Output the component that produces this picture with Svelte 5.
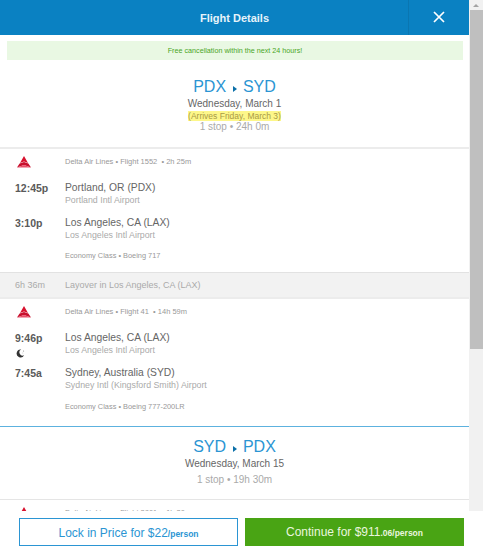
<script>
  const outbound = [
    {
      carrier: "Delta Air Lines • Flight 1552",
      duration: "2h 25m",
      depart: { time: "12:45p", city: "Portland, OR (PDX)", airport: "Portland Intl Airport" },
      arrive: { time: "3:10p", city: "Los Angeles, CA (LAX)", airport: "Los Angeles Intl Airport" },
      cabin: "Economy Class • Boeing 717",
      overnight: false
    },
    {
      carrier: "Delta Air Lines • Flight 41",
      duration: "14h 59m",
      depart: { time: "9:46p", city: "Los Angeles, CA (LAX)", airport: "Los Angeles Intl Airport" },
      arrive: { time: "7:45a", city: "Sydney, Australia (SYD)", airport: "Sydney Intl (Kingsford Smith) Airport" },
      cabin: "Economy Class • Boeing 777-200LR",
      overnight: true
    }
  ];
</script>

{#snippet delta()}
  <svg class="delta" viewBox="0 0 16 12" aria-hidden="true">
    <path d="M8 0 L12 7 L8 5.4 L4 7 Z" fill="#d8112e" />
    <path d="M3.6 7.6 L8 6 L12.4 7.6 L15 11.6 L8 9 L1 11.6 Z" fill="#c8102e" />
    <path d="M1 11.6 L8 9 L15 11.6 Z" fill="#e8506a" />
  </svg>
{/snippet}

{#snippet segment(seg)}
  <div class="segment" class:long={seg.overnight}>
    <div class="carrier">
      <span class="logo">{@render delta()}</span>
      <span class="small">{seg.carrier} &nbsp;• {seg.duration}</span>
    </div>
    <div class="stop">
      <span class="time">{seg.depart.time}</span>
      <div>
        <div class="city">{seg.depart.city}</div>
        <div class="airport">{seg.depart.airport}</div>
      </div>
    </div>
    {#if seg.overnight}
      <svg class="moon" viewBox="0 0 10 10" aria-hidden="true">
        <path d="M5.8 0.6 A4.4 4.4 0 1 0 9 7 A3.4 3.4 0 0 1 5.8 0.6 Z" fill="#333" />
        <circle cx="8.4" cy="2.2" r="0.6" fill="#888" />
        <circle cx="7.6" cy="4.4" r="0.5" fill="#aaa" />
      </svg>
    {/if}
    <div class="stop" class:after-moon={seg.overnight}>
      <span class="time">{seg.arrive.time}</span>
      <div>
        <div class="city">{seg.arrive.city}</div>
        <div class="airport">{seg.arrive.airport}</div>
      </div>
    </div>
    <div class="small cabin">{seg.cabin}</div>
  </div>
{/snippet}

<div class="page">
  <div class="upper">
    <div class="main">
      <header>
        <h1>Flight Details</h1>
        <button class="close" aria-label="Close">
          <svg viewBox="0 0 12 12" width="12" height="12">
            <path d="M1 1 L11 11 M11 1 L1 11" stroke="#fff" stroke-width="1.7" fill="none" />
          </svg>
        </button>
      </header>

      <div class="notice">Free cancellation within the next 24 hours!</div>

      <section class="route first">
        <h2>PDX <span class="arrow"></span> SYD</h2>
        <div class="date">Wednesday, March 1</div>
        <div class="arrives"><mark>(Arrives Friday, March 3)</mark></div>
        <div class="stops">1 stop • 24h 0m</div>
      </section>

      {@render segment(outbound[0])}

      <div class="layover">
        <span>6h 36m</span>
        <span>Layover in Los Angeles, CA (LAX)</span>
      </div>

      {@render segment(outbound[1])}

      <section class="route second">
        <h2>SYD <span class="arrow"></span> PDX</h2>
        <div class="date">Wednesday, March 15</div>
        <div class="stops">1 stop • 19h 30m</div>
      </section>

      <div class="segment cut">
        <div class="carrier">
          <span class="logo">{@render delta()}</span>
          <span class="small">Delta Air Lines • Flight 3801 &nbsp;• 1h 30m</span>
        </div>
      </div>
    </div>

    <div class="scrollbar">
      <span class="up"></span>
      <span class="thumb"></span>
    </div>
  </div>

  <footer>
    <button class="lock">Lock in Price for $22<small>/person</small></button>
    <button class="continue">Continue for $911<small>.06/person</small></button>
  </footer>
</div>

<style>
  :global(body) {
    margin: 0;
    background: #fff;
  }

  .page {
    height: 550px;
    display: flex;
    flex-direction: column;
    overflow: hidden;
    font-family: "Liberation Sans", Arial, sans-serif;
    color: #555;
  }

  .upper {
    flex: 1;
    min-height: 0;
    display: flex;
  }

  .main {
    flex: 1;
    min-width: 0;
    overflow: hidden;
  }

  header {
    height: 35px;
    background: #0a81c2;
    display: flex;
    align-items: center;
  }

  h1 {
    flex: 1;
    margin: 0;
    padding-left: 61px;
    text-align: center;
    font-size: 11px;
    font-weight: 700;
    color: #e6f3fa;
  }

  .close {
    width: 61px;
    height: 35px;
    padding: 0 0 2px;
    border: 0;
    border-left: 1px solid #0a76b1;
    background: none;
    display: flex;
    align-items: center;
    justify-content: center;
  }

  .notice {
    margin: 6px 6px 0 7px;
    height: 19px;
    line-height: 19px;
    background: #e9f8e3;
    color: #4aa51f;
    font-size: 7.2px;
    text-align: center;
  }

  .route {
    text-align: center;
  }

  .route.first {
    padding-top: 17px;
    height: 70px;
  }

  .route.second {
    height: 62px;
    margin-top: 3px;
    border-top: 1px solid #5db2df;
    border-bottom: 1px solid #e5e5e5;
    padding-top: 10px;
  }

  h2 {
    margin: 0;
    font-size: 16px;
    line-height: 20px;
    font-weight: 400;
    color: #2b95d3;
  }

  .arrow {
    display: inline-block;
    width: 0;
    height: 0;
    margin: 0 2px;
    border-left: 4px solid #0a6fa8;
    border-top: 3.5px solid transparent;
    border-bottom: 3.5px solid transparent;
    vertical-align: 0;
  }

  .date {
    font-size: 10px;
    line-height: 14px;
    color: #666;
  }

  .arrives {
    font-size: 8.5px;
    line-height: 10px;
  }

  mark {
    background: #fdf78a;
    color: #a99a45;
  }

  .stops {
    font-size: 10px;
    line-height: 11px;
    color: #aaa;
  }

  .second .stops {
    margin-top: 3px;
  }

  .segment {
    border-top: 2px solid #ececec;
    padding: 0 0 11px 15px;
  }

  .carrier {
    display: flex;
    align-items: center;
    height: 25px;
    padding-bottom: 1px;
  }

  .logo {
    width: 50px;
    display: flex;
    padding-left: 1px;
    box-sizing: border-box;
  }

  .delta {
    width: 16px;
    height: 12px;
  }

  .small {
    font-size: 7.5px;
    color: #999;
  }

  .stop {
    display: grid;
    grid-template-columns: 50px 1fr;
    margin-top: 6px;
    height: 28px;
  }

  .stop + .stop {
    margin-top: 7px;
  }

  .time {
    font-size: 10.5px;
    line-height: 14px;
    font-weight: 700;
    color: #5a5a5a;
  }

  .city {
    font-size: 10.3px;
    line-height: 14px;
    color: #666;
  }

  .airport {
    font-size: 8.8px;
    line-height: 11px;
    color: #aaa;
  }

  .moon {
    display: block;
    width: 9px;
    height: 9px;
    margin: -10px 0 0 1px;
  }

  .stop.after-moon {
    margin-top: 8px;
  }

  .cabin {
    margin: 7px 0 0 50px;
    line-height: 10px;
    font-size: 7.4px;
  }

  .long .cabin {
    margin-top: 8px;
  }

  .layover {
    height: 24px;
    background: #f2f2f2;
    border-top: 1px solid #e2e2e2;
    padding-left: 15px;
    display: grid;
    grid-template-columns: 50px 1fr;
    align-items: center;
    font-size: 9px;
    color: #aaa;
  }

  .cut {
    border-top: 0;
  }

  .scrollbar {
    width: 14px;
    background: #f1f1f1;
    display: flex;
    flex-direction: column;
    align-items: center;
  }

  .up {
    width: 0;
    height: 0;
    margin: 4px 0 3px;
    border-left: 3px solid transparent;
    border-right: 3px solid transparent;
    border-bottom: 3px solid #a3a3a3;
  }

  .thumb {
    width: 100%;
    height: 339px;
    margin-left: 1px;
    background: #bfbfbf;
  }

  footer {
    height: 39px;
    background: #fff;
    padding: 7px 6px 3px 19px;
    box-sizing: border-box;
    display: flex;
    gap: 7px;
  }

  footer button {
    height: 28px;
    padding: 0;
    font-family: inherit;
    font-size: 12px;
  }

  footer small {
    font-size: 8.5px;
    font-weight: 700;
  }

  .lock {
    width: 219px;
    background: #fff;
    border: 1px solid #2b95d3;
    color: #2b95d3;
    padding-top: 2px;
  }

  .continue {
    width: 219px;
    background: #49a414;
    border: 0;
    color: #e9f6df;
  }
</style>
